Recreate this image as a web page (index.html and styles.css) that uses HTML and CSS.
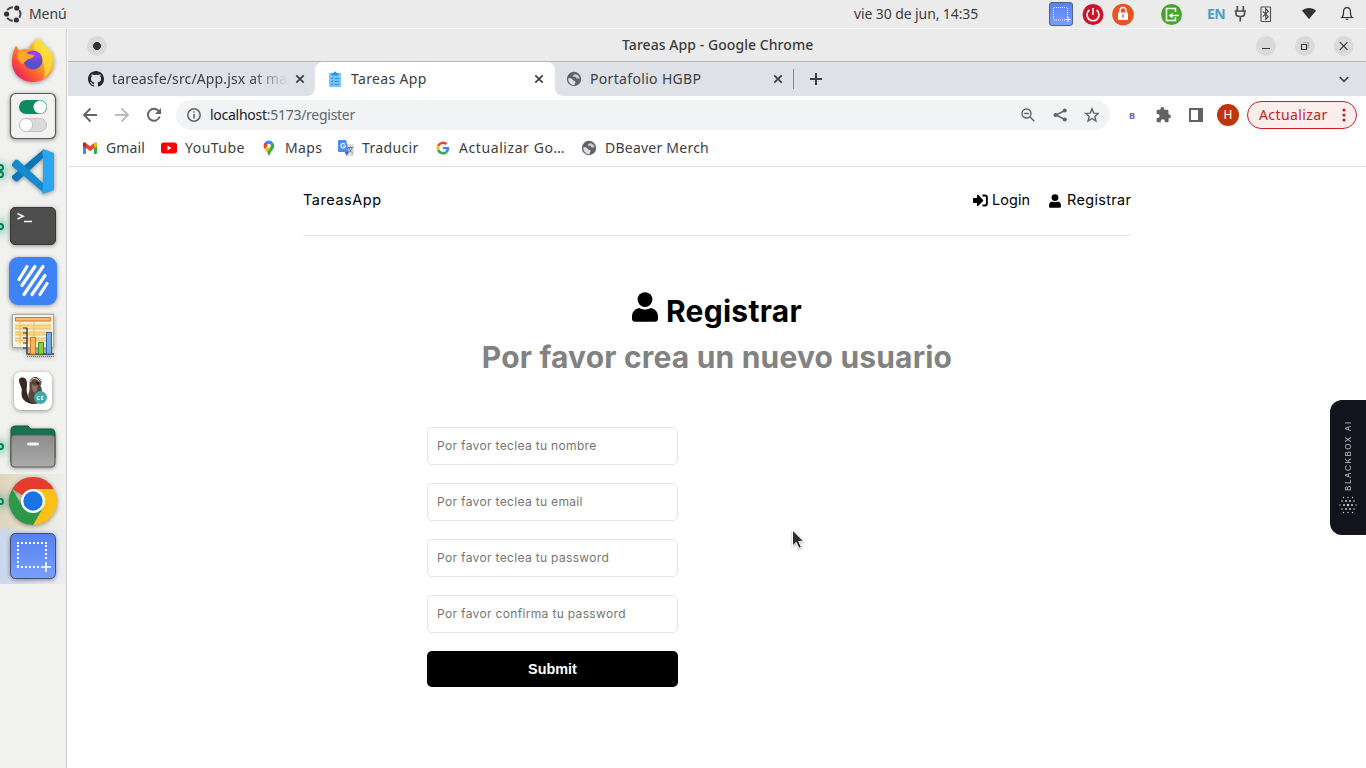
FILE: index.html
```html
<!DOCTYPE html>
<html lang="es">
<head>
<meta charset="utf-8">
<title>Tareas App</title>
<link rel="stylesheet" href="styles.css">
</head>
<body>
<svg class="defs" width="0" height="0">
  <defs>
    <symbol id="globe" viewBox="0 0 16 16"><circle cx="8" cy="8" r="7.200" fill="#5f6368"/><path d="M2.200 7.500c2.300-.6 3.800.1 4.600 1.500.6 1 2 .7 2.600 1.500.5.800-.6 1.500-.9 3.700-3.600.2-6.300-2.700-6.300-6.700z" fill="#dee1e6"/><path d="M8.600 3.200L6.500 5c.2 1 1.500.6 2.600.7 1 .2.600 1.300 1.500 1.700 1 .5 1.700-.3 3.100.3-.2-2.300-2.200-4.800-5.100-4.500z" fill="#dee1e6" opacity=".85"/></symbol>
    <symbol id="close" viewBox="0 0 10 10"><path d="M1.300 1.300l7.400 7.400M8.700 1.300L1.300 8.700" stroke="#3c4043" stroke-width="1.700"/></symbol>
    <symbol id="user" viewBox="0 0 14 16"><circle cx="7" cy="4" r="4"/><path d="M4 7.700C1.300 8.100 0 10.300 0 13v1.400C0 15.300.7 16 1.600 16h10.800c.9 0 1.600-.7 1.600-1.600V13c0-2.700-1.300-4.900-4-5.300-1.800 1.200-4.200 1.200-6 0z" transform="translate(0 1.700) scale(1 .89)"/></symbol>
    <linearGradient id="blue" x2="0" y2="1"><stop stop-color="#5682ed"/><stop offset="1" stop-color="#789eff"/></linearGradient>
    <linearGradient id="fox" x1="1" x2="0" y2="1"><stop offset=".1" stop-color="#fff04a"/><stop offset=".4" stop-color="#ffaa24"/><stop offset=".68" stop-color="#ff5634"/><stop offset="1" stop-color="#e0007b"/></linearGradient>
    <radialGradient id="orb" cx=".6" cy=".2"><stop stop-color="#b340ef"/><stop offset="1" stop-color="#5750c8"/></radialGradient>
    <linearGradient id="grey" x2="0" y2="1"><stop stop-color="#8c8c8c"/><stop offset="1" stop-color="#aaa"/></linearGradient>
  </defs>
</svg>

<header class="panel">
  <svg class="panel-logo" width="18" height="18" viewBox="0 0 18 18"><g fill="none" stroke="#454545" stroke-width="2"><path d="M3.200 5.200A7 7 0 0 1 8.800 2.200M15.300 5.300A7 7 0 0 1 15.300 12.700M8.800 15.800A7 7 0 0 1 3.200 12.800"/></g><g fill="#333"><circle cx="2.600" cy="9" r="2.600"/><circle cx="12.800" cy="3" r="2.600"/><circle cx="12.400" cy="15" r="2.600"/></g></svg>
  <span class="menu">Menú</span>
  <span class="clock">vie 30 de jun, 14:35</span>
  <svg class="status" width="317" height="28" viewBox="0 0 317 28">
    <rect x="0.500" y="2.500" width="23" height="23" rx="2.500" fill="url(#blue)" stroke="#53627e"/>
    <path d="M5 7.500h14M5 20h12M4.500 8v12M18.500 8v9" stroke="#fff" fill="none" stroke-dasharray="1 1"/><path d="M16.500 19.500h5M19 17v5" stroke="#fff"/>
    <circle cx="44" cy="14.500" r="10.500" fill="#c7162b"/><path d="M40.400 10a6 6 0 1 0 7.200 0M44 8v7" fill="none" stroke="#fff" stroke-width="1.600"/>
    <circle cx="74" cy="14.500" r="10.800" fill="#e95420"/><rect x="69" y="12.500" width="10" height="7.500" rx=".8" fill="#fff"/><path d="M71 13v-2.500a3 3 0 0 1 6 0V13" fill="none" stroke="#fff" stroke-width="1.500"/><rect x="73.300" y="14.500" width="1.400" height="3" fill="#e95420"/>
    <circle cx="122.500" cy="14.500" r="10.500" fill="#44a726"/><path d="M126.500 12V8.500h-9v12h9V17.500M130 15.500h-8" fill="none" stroke="#fff" stroke-width="1.500"/><path d="M119.500 15.500l4-2.800v5.600z" fill="#fff"/>
    <g stroke="#4d4d4d" fill="none" stroke-width="1.700"><path d="M188.300 6v5M194.300 6v5M185.500 11h11.500M187 11v2.500c0 2 1.500 3 4.300 3s4.300-1 4.300-3V11M191.300 16v5.500"/></g>
    <rect x="212" y="7" width="9.500" height="14.500" rx=".8" fill="none" stroke="#555" stroke-width="1.200"/><path d="M213.800 11.300l5.500 5.400-2.600 2.600V8.700l2.600 2.600-5.500 5.400" fill="none" stroke="#444" stroke-width="1.100"/>
    <path d="M253 10.700c3.600-3.600 10.400-3.600 14 0L260 19z" fill="#333"/>
    <path d="M293 17.500c1.500-1 1.500-3 1.500-5 0-3 1.500-4.800 3.500-4.800s3.500 1.800 3.500 4.800c0 2 0 4 1.500 5z" fill="none" stroke="#333" stroke-width="1.200"/><path d="M296.300 18.800a1.800 1.800 0 0 0 3.400 0z" fill="#333"/>
    <text class="lang" x="158" y="19">EN</text>
  </svg>
</header>

<div class="desktop">
  <nav class="dock">
    <div class="tile"><svg class="app" viewBox="0 0 66 55"><path d="M16 12c1 1 2 3 3 5 3-2 7-2 10-2 1-5 5-6 8-10l2-1c1 3 5 5 7 9 1 2 2 2 3 3 0-1 0-2-1-3 4 4 6 9 6 14 0 12-9 21-21 21S12 39 12 28c0-6 1-11 4-16z" fill="url(#fox)"/><path d="M34 12c0-4 2-6 5-8 1 4 5 6 8 10 8 10 6 23-3 30 2-10 0-18-6-23-3-2-4-5-4-9z" fill="#ffe13c" opacity=".75"/><circle cx="33" cy="26" r="9.500" fill="url(#orb)"/><path d="M18 18c4-2 8-1 10 2l6 1c0 4-6 3-8 6-2 2-3 1-3 4-4-4-7-7-5-13z" fill="#ffa52b"/></svg></div>
    <div class="tile"><svg class="app" viewBox="0 0 66 55"><rect x="10.500" y="4.500" width="45" height="45" rx="5" fill="#f2f2f2" stroke="#5d5d5d" stroke-width="1.200"/><rect x="19" y="11" width="28" height="14" rx="7" fill="#0e8a60"/><circle cx="40" cy="18" r="6.500" fill="#fff"/><rect x="19.500" y="29.500" width="27" height="13" rx="6.500" fill="#dadada" stroke="#c4c4c4"/><circle cx="26" cy="36" r="6.500" fill="#fff" stroke="#b5b5b5" stroke-width=".7"/></svg></div>
    <div class="tile"><i class="dot twin"></i><svg class="app" viewBox="0 0 66 55"><path d="M12 34l3 3c1 .6 2 .5 3 0l26-24V5L12 32z" fill="#0876b9"/><path d="M12 20l3-4c1-.5 2-.5 3 0l26 24v9L12 22z" fill="#148bd0"/><path d="M43 5l11 4v37l-11 4c-1-1-1-4 0-6V12c-1-2-1-5 0-7z" fill="#2ba5ef"/></svg></div>
    <div class="tile"><i class="dot"></i><svg class="app" viewBox="0 0 66 55"><rect x="10.500" y="8.500" width="45" height="37" rx="4.500" fill="#4d4d4d" stroke="#383838"/><path d="M17.500 14.500l5.500 2.700-5.500 2.700M24 22.500h8" fill="none" stroke="#f5f5f5" stroke-width="1.700"/></svg></div>
    <div class="tile"><svg class="app" viewBox="0 0 66 55"><rect x="9" y="3" width="48" height="48" rx="9" fill="#3d83f6"/><path d="M19 25.500l8-13M22 31.500l13-19M24 40.500l19-28M32 40.500l13-19M40 40.500l7-11" stroke="#fff" stroke-width="3.200" stroke-linecap="round"/></svg></div>
    <div class="tile"><svg class="app" viewBox="0 0 66 55"><rect x="12.500" y="5.500" width="41" height="33" fill="#f7f4e8" stroke="#a9a9a3"/><path d="M15 8h36v28H15z" fill="#fbf0d2"/><path d="M15.500 8.500h35v3.500h-35z" fill="#f6bb79" stroke="#d27626"/><path d="M15 16h36v4H15zM15 23h36v3H15zM15 29h36v3H15z" fill="#ffd98a"/><path d="M15 16h36M15 20h36M15 23h36M15 26h36M15 29h36M15 32h36M20 12v24M34 12v24" stroke="#e0b75e" stroke-width=".8"/><path d="M27 19v26h27" fill="none" stroke="#444" stroke-width="1.500"/><path d="M23 19h4M23 24h4M23 29h4M23 34h4M23 39h4" stroke="#333"/><path d="M30.500 28.500h5V45h-5z" fill="#ffb654" stroke="#d57518"/><path d="M38.500 33.500h5V45h-5z" fill="#88cf38" stroke="#438b18"/><path d="M46.500 23.500h5V45h-5z" fill="#7aaae4" stroke="#2966aa"/><path d="M27 47.500h27" stroke="#946838" stroke-dasharray="1 1"/></svg></div>
    <div class="tile"><svg class="app" viewBox="0 0 66 55"><rect x="14" y="8" width="38" height="38" rx="7" fill="#fff"/><path d="M19 16c0-2 2-2.500 4-2.500 3 .5 4 3 4 6 0 4-1 7 .5 11 1 4 4 8 8.500 9.500-5 .5-10-1-13-5-3-5 0-8-2-12-1-3-2-4-2-7z" fill="#372622"/><path d="M29.500 19c0-3.500 2.500-6 6-6 3 0 6 2 6 5 0 2-1 3-1 4 2 3 1.500 8 1 11l-4 6.500c-2 1-5 0-7-2-3-3-2.500-8-1-11z" fill="#5a463c"/><path d="M32 20c2 2 5 2 6 1-1 3 0 5-3 8-2-1-4-5-3-9z" fill="#8b7465"/><path d="M30 18l3-3.500 4 .5 3 3.500M37 13l4 4" stroke="#d5cbc3" fill="none"/><path d="M35 18h5l-2 3z" fill="#231815"/><circle cx="40.500" cy="33.500" r="6.500" fill="#43aaa9"/><text class="ce" x="36.600" y="36.200">CE</text></svg></div>
    <div class="tile"><i class="dot"></i><svg class="app" viewBox="0 0 66 55"><path d="M11 43V11c0-3 2-4 5-4h12l3 3h20c3 0 4 2 4 5v24z" fill="#147452" stroke="#17553f"/><rect x="11" y="16" width="44" height="32" rx="4" fill="url(#grey)" stroke="#5d5d5d" stroke-width="1.200"/><path d="M28.500 25h9" stroke="#f3f3f3" stroke-width="3" stroke-linecap="round"/></svg></div>
    <div class="tile chrome"><i class="dot"></i><svg class="app" viewBox="0 0 66 55"><path d="M33 27L12.200 15A24 24 0 0 1 53.800 15z" fill="#e33b2e"/><path d="M33 15h20.800A24 24 0 0 1 33 51l10.400-18z" fill="#fbc116"/><path d="M22.600 33L12.200 15A24 24 0 0 0 33 51l10.400-18z" fill="#2d9948"/><circle cx="33" cy="27" r="12" fill="#fff"/><circle cx="33" cy="27" r="9.700" fill="#1b73e8"/></svg></div>
    <div class="tile shot"><svg class="app" viewBox="0 0 66 55"><rect x="10.500" y="4.500" width="45" height="45" rx="5" fill="url(#blue)" stroke="#45526c"/><path d="M17 14h30M18 16v21M46 16v16M17 38h24" stroke="#fff" stroke-width="2" stroke-dasharray="2 2"/><path d="M41 38h10M46 33v10" stroke="#fff" stroke-width="1.600"/></svg></div>
  </nav>

  <main class="window">
    <div class="titlebar">
      <i class="round pin"></i>
      <b class="window-title">Tareas App - Google Chrome</b>
      <svg class="window-buttons" width="100" height="20" viewBox="0 0 100 20"><g fill="#dadada"><circle cx="11" cy="10" r="10"/><circle cx="50" cy="10" r="10"/><circle cx="88.700" cy="10" r="10"/></g><g fill="none" stroke="#3a3a3a" stroke-width="1.200"><path d="M7 12.500h8M46.500 8.500h5v5h-5zM84.900 6.200l7.600 7.600M92.500 6.200l-7.600 7.600"/><path d="M48 6.500h5.500V12" stroke="#aaa"/></g></svg>
    </div>
    <div class="tabs">
      <div class="tab first"><svg width="16" height="16" viewBox="0 0 16 16"><path fill="#24292f" d="M8 0C3.580 0 0 3.580 0 8c0 3.540 2.290 6.530 5.470 7.590.4.070.55-.17.55-.38 0-.19-.01-.82-.01-1.490-2.010.37-2.530-.49-2.690-.94-.09-.23-.48-.94-.82-1.130-.28-.15-.68-.52-.01-.53.63-.01 1.080.58 1.230.82.72 1.210 1.870.87 2.330.66.070-.52.28-.87.51-1.070-1.780-.2-3.640-.89-3.640-3.950 0-.87.31-1.590.82-2.150-.08-.2-.36-1.020.08-2.120 0 0 .67-.21 2.200.82A7.500 7.500 0 0 1 8 3.860c.68 0 1.360.09 2 .27 1.530-1.040 2.200-.82 2.200-.82.44 1.100.16 1.920.08 2.120.51.56.82 1.270.82 2.150 0 3.070-1.870 3.750-3.650 3.950.29.25.54.73.54 1.480 0 1.070-.01 1.930-.01 2.200 0 .21.15.46.55.38A8 8 0 0 0 16 8c0-4.420-3.580-8-8-8z"/></svg><span class="tab-text faded">tareasfe/src/App.jsx at ma</span><svg class="x" width="10" height="10"><use href="#close"/></svg></div>
      <div class="tab active"><svg width="14" height="16" viewBox="0 0 14 16"><rect x="1" y="2" width="12" height="14" rx="1" fill="#7cc4ff"/><path d="M3.500 4.500V2h2a1.500 1.500 0 0 1 3 0h2v2.500z" fill="#2196f3"/><path d="M3 7l1 1 1-2M3 10l1 1 1-2M3 13l1 1 1-2M6.500 7.500H11M6.500 10.500H11M6.500 13.500H11" fill="none" stroke="#1c85e0" stroke-width=".8"/></svg><span class="tab-text">Tareas App</span><svg class="x" width="10" height="10"><use href="#close"/></svg></div>
      <div class="tab third"><svg width="16" height="16"><use href="#globe"/></svg><span class="tab-text">Portafolio HGBP</span><svg class="x" width="10" height="10"><use href="#close"/></svg></div>
      <i class="tab-line"></i>
      <svg class="plus" width="12" height="12" viewBox="0 0 12 12"><path d="M6 0v12M0 6h12" stroke="#3c4043" stroke-width="2"/></svg>
      <svg class="chevron" width="10" height="7" viewBox="0 0 10 7"><path d="M.7 1l4.300 4.300L9.300 1" fill="none" stroke="#3c4043" stroke-width="1.700"/></svg>
    </div>
    <div class="toolbar">
      <svg class="nav-icons" width="80" height="16" viewBox="0 0 80 16"><g fill="none" stroke="#5f6368" stroke-width="1.900"><path d="M14 8H1.500M7.500 1.500L1 8l6.500 6.500"/><path d="M32 8h12.500M38.500 1.500L45 8l-6.500 6.500" stroke="#babcbe"/><path d="M76 4.500a6 6 0 1 0 .7 5"/></g><path d="M78 1v6h-6z" fill="#5f6368"/></svg>
      <div class="address">
        <svg width="14" height="14" viewBox="0 0 14 14"><circle cx="7" cy="7" r="6.200" fill="none" stroke="#5f6368" stroke-width="1.500"/><path d="M7 6v4.500M7 3.200v1.600" stroke="#5f6368" stroke-width="1.500"/></svg>
        <span class="url"><b>localhost</b>:5173/register</span>
        <svg class="address-icons" width="78" height="16" viewBox="0 0 78 16"><g fill="none" stroke="#5f6368" stroke-width="1.400"><circle cx="5.500" cy="6.500" r="4.500"/><path d="M8.800 9.800l4.500 4.500M3.200 6.500h4.600M44 3.500L35 8l9 4.500"/><path d="M71 1.800l1.700 4.300 4.600.3-3.500 3 1.100 4.500L71 11.500l-3.900 2.400 1.100-4.500-3.500-3 4.600-.3z"/></g><g fill="#5f6368"><circle cx="43.800" cy="3.500" r="2"/><circle cx="34.500" cy="8" r="2"/><circle cx="43.800" cy="12.500" r="2"/></g></svg>
      </div>
      <span class="ext">B</span>
      <svg class="puzzle" width="16" height="16" viewBox="0 0 16 16"><path fill="#5f6368" d="M13.500 7.500h-1V4.200c0-.8-.6-1.400-1.400-1.400H8.200v-.9a1.900 1.900 0 0 0-3.800 0v.9H2C1.200 2.800.6 3.400.6 4.200v2.700h1a2 2 0 0 1 0 4h-1v3c0 .8.6 1.400 1.400 1.400h2.800v-1a2 2 0 0 1 4 0v1h2.400c.8 0 1.400-.6 1.400-1.400v-2.700h.9a1.900 1.900 0 0 0 0-3.700z"/></svg>
      <svg class="side" width="14" height="14" viewBox="0 0 14 14"><path d="M1 1h12v12H1z" fill="none" stroke="#5f6368" stroke-width="2"/><path d="M9 0h5v14H9z" fill="#5f6368"/></svg>
      <span class="avatar">H</span>
      <button class="update"><span>Actualizar</span><svg width="4" height="14" viewBox="0 0 4 14"><g fill="#c5221f"><circle cx="2" cy="2" r="1.600"/><circle cx="2" cy="7" r="1.600"/><circle cx="2" cy="12" r="1.600"/></g></svg></button>
    </div>
    <div class="bookmarks">
      <span class="bm gmail"><svg width="16" height="16" viewBox="0 0 16 16"><path d="M1 4l3 2v8H2a1 1 0 0 1-1-1z" fill="#4285f4"/><path d="M15 4l-3 2v8h2a1 1 0 0 0 1-1z" fill="#34a853"/><path d="M1 6V4c0-1.500 1.500-2 2.500-1.200L8 6.200l4.500-3.400C13.500 2 15 2.500 15 4v2l-7 5z" fill="#ea4335"/><path d="M12 3.200l.5-.4C13.500 2 15 2.500 15 4v2l-3 2z" fill="#fbbc04"/><path d="M1 4c0-1.500 1.500-2 3-.8V8L1 6z" fill="#c5221f"/></svg><span>Gmail</span></span>
      <span class="bm youtube"><svg width="16" height="16" viewBox="0 0 16 16"><rect y="2.500" width="16" height="11" rx="2.500" fill="red"/><path d="M6.500 5.500l4 2.500-4 2.500z" fill="#fff"/></svg><span>YouTube</span></span>
      <span class="bm maps"><svg width="16" height="16" viewBox="0 0 16 16"><path d="M8 .5a5.200 5.200 0 0 0-4 8.600L8 6l4-3.400A5.200 5.200 0 0 0 8 .5z" fill="#4285f4"/><path d="M4 2.500A5.200 5.200 0 0 0 4 9l4-3z" fill="#ea4335"/><path d="M3.800 8.800L11.900 2.500c2 2.500 1.500 5 0 6.900C10 11.500 9 13 8.500 15.500h-1C7 12.800 5.300 10.800 3.800 8.800z" fill="#34a853"/><path d="M3.800 8.800L6 6l3.700 2-3.600 4.200z" fill="#fbbc04"/><circle cx="8" cy="5.700" r="1.900" fill="#fff"/></svg><span>Maps</span></span>
      <span class="bm translate"><svg width="16" height="16" viewBox="0 0 16 16"><path d="M6 4h9c.6 0 1 .4 1 1v11H8z" fill="#ddd"/><path d="M1 0h7l3 12H1c-.6 0-1-.4-1-1V1c0-.6.4-1 1-1z" fill="#4b8bf5"/><path d="M7 12h4l-2.500 4z" fill="#3367d6"/><path d="M7 4.300A2.300 2.300 0 1 0 7.500 6H5.200" fill="none" stroke="#fff" stroke-width="1.100"/><path d="M10 7.500h5M12.500 6.500v1M14 8c-.5 2-2 3.500-3.500 4M11 8c.5 2 2 4 3.500 5" fill="none" stroke="#607d8b"/></svg><span>Traducir</span></span>
      <span class="bm google"><svg width="14" height="14" viewBox="-2 0 52 48"><path fill="#ea4335" d="M24 9.500c3.500 0 6.700 1.200 9.200 3.600l6.900-6.900A24 24 0 0 0 2.600 13.200l8 6.200C12.400 13.700 17.700 9.500 24 9.500z"/><path fill="#4285f4" d="M47 24.600c0-1.600-.2-3.100-.4-4.600H24v9h12.900a11 11 0 0 1-4.700 7.200l7.700 6c4.500-4.200 7.100-10.400 7.100-17.600z"/><path fill="#fbbc05" d="M10.500 28.600a14.500 14.500 0 0 1 0-9.200l-8-6.200a24 24 0 0 0 0 21.600z"/><path fill="#34a853" d="M24 48c6.500 0 11.900-2.100 15.900-5.800l-7.700-6c-7 4.700-18.300 2-21.700-7.600l-8 6.200C6.500 42.600 14.600 48 24 48z"/></svg><span>Actualizar Go…</span></span>
      <span class="bm dbeaver"><svg width="16" height="16"><use href="#globe"/></svg><span>DBeaver Merch</span></span>
    </div>

    <section class="page">
      <header class="site-header">
        <span class="brand">TareasApp</span>
        <a class="login"><svg width="15" height="13" viewBox="0 0 15 13"><path d="M0 4.700C0 4.300.3 4 .7 4H4V1.600c0-.8.8-1.100 1.400-.6l4.500 4.700c.5.500.5 1 0 1.500l-4.500 4.600c-.6.600-1.400.2-1.400-.6V9H.7C.3 9 0 8.700 0 8.300z"/><path d="M9.500 1.500h2.300c1.300 0 2.100.8 2.100 2.100v5.800c0 1.300-.8 2.100-2.100 2.100H9.500" fill="none" stroke="#000" stroke-width="1.900"/></svg><span>Login</span></a>
        <a class="register"><svg width="12" height="14"><use href="#user"/></svg><span>Registrar</span></a>
      </header>
      <div class="heading">
        <h1><svg width="26" height="30"><use href="#user"/></svg><span>Registrar</span></h1>
        <p>Por favor crea un nuevo usuario</p>
      </div>
      <form class="form">
        <input class="field" placeholder="Por favor teclea tu nombre">
        <input class="field" placeholder="Por favor teclea tu email">
        <input class="field" placeholder="Por favor teclea tu password">
        <input class="field" placeholder="Por favor confirma tu password">
        <button class="submit" type="button">Submit</button>
      </form>
    </section>
  </main>
</div>

<aside class="blackbox">
  <span>BLACKBOX AI</span>
  <svg width="18" height="18" viewBox="0 0 18 18"><g fill="#d5d5d9"><circle cx="4.500" cy="1.500" r=".7"/><circle cx="9" cy="1.500" r=".7"/><circle cx="13.500" cy="1.500" r=".7"/><circle cx="3" cy="5" r=".8"/><circle cx="7" cy="5" r=".9"/><circle cx="11" cy="5" r=".9"/><circle cx="15" cy="5" r=".8"/><circle cx="1" cy="9" r=".7"/><circle cx="5" cy="9" r="1"/><circle cx="9" cy="9" r="1.200"/><circle cx="13" cy="9" r="1"/><circle cx="17" cy="9" r=".7"/><circle cx="3" cy="13" r=".8"/><circle cx="7" cy="13" r=".9"/><circle cx="11" cy="13" r=".9"/><circle cx="15" cy="13" r=".8"/><circle cx="4.500" cy="16.500" r=".7"/><circle cx="9" cy="16.500" r=".7"/><circle cx="13.500" cy="16.500" r=".7"/></g></svg>
</aside>
<svg class="cursor" width="14" height="21" viewBox="0 0 14 21"><path d="M1.500 1v16l3.700-3.600 2.700 6 2.600-1.200-2.700-5.800h5z" fill="#2d2d2d" stroke="#fff"/></svg>
</body>
</html>
```

FILE: styles.css
```css
* { box-sizing: border-box; }
body { margin: 0; width: 1366px; height: 768px; overflow: hidden; background: #fff; font-family: "Noto Sans", sans-serif; font-size: 14px; color: #3c4043; }
svg { display: block; flex: none; }
span, b, p { white-space: nowrap; }
i { display: block; flex: none; }
.defs { position: absolute; }

.panel { display: flex; align-items: center; height: 29px; padding-left: 4px; background: #ebebeb; border-bottom: 1px solid #fafafa; color: #3d3d3d; }
.menu { flex: none; width: 825px; margin: 0 0 1px 7px; letter-spacing: -.1px; }
.clock { flex: none; width: 195px; margin-bottom: 1px; letter-spacing: -.1px; }
.lang { font: 700 14px "Noto Sans", sans-serif; fill: #4ba0c4; letter-spacing: -.5px; }

.desktop { display: flex; height: 739px; }
.dock { flex: none; width: 68px; padding-top: 5px; background: #f1f1ef; border-right: 1px solid #fff; box-shadow: inset -1px 0 #cfcfcf; }
.tile { position: relative; width: 66px; height: 55px; }
.app { width: 66px; height: 55px; filter: drop-shadow(0 1px 2px rgba(0, 0, 0, .4)); }
.chrome { background: linear-gradient(90deg, #dfd5bd, #f0efec); }
.shot { background: linear-gradient(90deg, #cbd7ed, #ecedf0); }
.dot { position: absolute; left: -3px; top: 24px; width: 7px; height: 7px; border: 2px solid #087f58; border-radius: 50%; background: #9be0c6; box-shadow: 0 0 9px 4px rgba(16, 160, 107, .4); }
.twin { top: 20px; box-shadow: 0 7px 0 -2px #9be0c6, 0 7px 0 #087f58, 0 4px 9px 5px rgba(16, 160, 107, .4); }

.window { flex: 1; display: flex; flex-direction: column; min-width: 0; }
.titlebar { display: flex; align-items: center; height: 33px; padding-left: 19px; background: #ebebeb; border-bottom: 1px solid #b6b6b8; }
.round { width: 20px; height: 20px; margin-top: 1px; border-radius: 50%; }
.pin { background: radial-gradient(circle, #333 0 3.700px, #dadada 4.300px); }
.window-title { width: 633px; margin: 0 0 1px 515px; font-weight: 500; font-size: 14px; letter-spacing: .06px; color: #3b3b3b; }
.window-buttons { margin-top: 1px; }

.tabs { display: flex; align-items: center; height: 34px; background: linear-gradient(#dee1e6, #dee1e6) 0 0 / 100% 26px no-repeat, linear-gradient(90deg, #dee1e6 239px, #fff 239px 495px, #dee1e6 495px); }
.tab { display: flex; align-items: center; height: 34px; background: #dee1e6; }
.tab-text { flex: 1; margin: 0 0 2px 8px; letter-spacing: .33px; overflow: hidden; }
.first { width: 247px; padding: 0 10px 0 20px; border-bottom-right-radius: 8px; }
.faded { margin-right: 7px; letter-spacing: .14px; -webkit-mask-image: linear-gradient(90deg, #000 140px, transparent 176px); mask-image: linear-gradient(90deg, #000 140px, transparent 176px); }
.active { width: 240px; padding: 0 11px 0 13px; background: #fff; border-radius: 8px 8px 0 0; }
.active .tab-text { margin-left: 9px; }
.third { width: 238px; padding: 0 10px 0 11px; border-bottom-left-radius: 8px; }
.tab-line { width: 1px; height: 20px; background: #888c92; }
.plus { margin-left: 16px; }
.chevron { margin-left: 517px; }

.toolbar { display: flex; align-items: center; height: 38px; padding-left: 15px; }
.address { display: flex; align-items: center; width: 934px; height: 30px; margin-left: 13px; padding-left: 11px; border-radius: 15px; background: #f1f3f4; }
.url { flex: 1; margin: 0 0 2px 9px; color: #62666a; letter-spacing: -.27px; }
.url b { color: #202124; font-weight: 400; }
.address-icons { margin-right: 11px; }
.ext { width: 8px; margin-left: 19px; font-size: 9px; font-weight: 700; color: #6466c3; }
.puzzle { margin-left: 19px; }
.side { margin-left: 17px; }
.avatar { width: 22px; height: 22px; margin-left: 14px; border-radius: 50%; background: #bf360c; color: #fff; font-size: 12px; line-height: 22px; text-align: center; }
.update { display: flex; align-items: center; width: 110px; height: 28px; margin-left: 8px; padding: 0 10px 0 11px; border: 1px solid #c5221f; border-radius: 14px; background: #faeeed; color: #c5221f; font: 14px "Noto Sans", sans-serif; }
.update span { flex: 1; margin-bottom: 2px; text-align: left; letter-spacing: .4px; }

.bookmarks { display: flex; align-items: center; height: 33px; padding: 0 0 4px 14px; border-bottom: 1px solid #dadce0; }
.bm { display: flex; align-items: center; flex: none; }
.bm span { margin: 0 0 2px 8px; letter-spacing: .35px; }
.gmail { width: 79px; }
.gmail span { letter-spacing: .15px; }
.youtube { width: 100px; }
.youtube span { letter-spacing: .48px; }
.maps { width: 77px; }
.translate { width: 98px; }
.google { width: 145px; }
.google span { margin-left: 9px; letter-spacing: .58px; }
.dbeaver span { letter-spacing: .23px; }

.page { flex: 1; width: 828px; margin-left: 235px; color: #000; font-family: Inter, sans-serif; }
.site-header { display: flex; align-items: center; height: 69px; padding-bottom: 2px; border-bottom: 1px solid #e6e6e6; font-size: 14.400px; }
.site-header span { margin-bottom: 2px; }
.brand { flex: 1; letter-spacing: .6px; }
.site-header a { display: flex; align-items: center; }
.login { width: 76px; }
.login svg, .register svg { margin-top: 1px; }
.login span { margin-left: 4px; letter-spacing: .1px; }
.register { width: 82px; }
.register span { margin-left: 6px; letter-spacing: .37px; }
.heading { padding-top: 52px; text-align: center; font-size: 30px; font-weight: 700; line-height: 46px; letter-spacing: .18px; }
.heading h1 { display: flex; justify-content: center; align-items: center; gap: 8px; margin: 0; font-size: inherit; line-height: inherit; letter-spacing: .3px; }
.heading h1 svg { margin-bottom: 8px; }
.heading p { margin: 0; color: #828282; }
.form { display: flex; flex-direction: column; gap: 18px; width: 251px; margin: 47px 0 0 124px; }
.field { height: 38px; padding: 0 9px 2px; border: 1px solid #e6e6e6; border-radius: 5px; outline: 0; font: 12px Inter, sans-serif; letter-spacing: .34px; }
.field::placeholder { color: #757575; opacity: 1; }
.submit { height: 36px; border: 0; border-radius: 5px; background: #000; color: #fff; font: 700 14.400px "Liberation Sans", sans-serif; }

.blackbox { position: absolute; left: 1330px; top: 400px; display: flex; flex-direction: column; align-items: center; width: 36px; height: 135px; padding-top: 20px; border-radius: 12px 0 0 12px; background: #12131c; }
.blackbox span { height: 71px; writing-mode: vertical-rl; transform: rotate(180deg); font: 8px/10px Inter, sans-serif; letter-spacing: 1.650px; color: #c8c8cb; }
.blackbox svg { margin-top: 5px; }
.cursor { position: absolute; left: 791px; top: 529px; filter: drop-shadow(0 1px 1px rgba(0, 0, 0, .3)); }
.ce { font: 700 6px "Noto Sans", sans-serif; fill: #fff; }
```
